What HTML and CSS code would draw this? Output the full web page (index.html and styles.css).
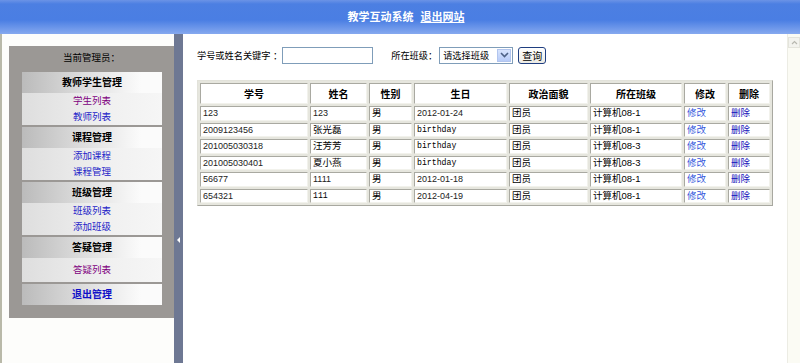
FILE: index.html
```html
<!DOCTYPE html>
<html lang="zh-CN">
  <head>
    <meta charset="UTF-8" />
    <title>教学互动系统</title>
    <link rel="stylesheet" href="styles.css">
  </head>
  <body>
    <div class="top">
      <span class="top-title">教学互动系统</span>
      <a href="#" class="top-exit">退出网站</a>
    </div>

    <div class="frames">
      <div class="left-frame">
        <div class="panel">
          <div class="admin">当前管理员：</div>
          <div class="menu">
            <div class="menu-head">教师学生管理</div>
            <div class="menu-items">
              <a href="#" class="visited">学生列表</a>
              <a href="#">教师列表</a>
            </div>
            <div class="menu-head">课程管理</div>
            <div class="menu-items">
              <a href="#">添加课程</a>
              <a href="#">课程管理</a>
            </div>
            <div class="menu-head">班级管理</div>
            <div class="menu-items">
              <a href="#">班级列表</a>
              <a href="#">添加班级</a>
            </div>
            <div class="menu-head">答疑管理</div>
            <div class="menu-items single">
              <a href="#" class="visited">答疑列表</a>
            </div>
            <div class="menu-head logout">退出管理</div>
          </div>
        </div>
      </div>

      <div class="splitter"><span class="arrow"></span></div>

      <div class="right-frame">
        <div class="content">
          <div class="search">
            <span>学号或姓名关键字 ：</span>
            <input type="text" class="keyword" />
            <span class="class-label">所在班级：</span>
            <div class="select">
              <span class="select-text">请选择班级</span>
              <span class="select-btn">
                <svg width="9" height="6" viewBox="0 0 9 6"><path d="M1 1 L4.5 4.5 L8 1" fill="none" stroke="#4d6185" stroke-width="1.6"/></svg>
              </span>
            </div>
            <button class="query">查询</button>
          </div>

          <table class="list">
            <tr>
              <th class="c1">学号</th>
              <th class="c2">姓名</th>
              <th class="c3">性别</th>
              <th class="c4">生日</th>
              <th class="c5">政治面貌</th>
              <th class="c6">所在班级</th>
              <th class="c7">修改</th>
              <th>删除</th>
            </tr>
            <tr>
              <td class="num">123</td>
              <td class="num">123</td>
              <td>男</td>
              <td class="num">2012-01-24</td>
              <td>团员</td>
              <td>计算机08-1</td>
              <td><a href="#" class="edit">修改</a></td>
              <td><a href="#" class="del">删除</a></td>
            </tr>
            <tr>
              <td class="num">2009123456</td>
              <td>张光磊</td>
              <td>男</td>
              <td class="mono">birthday</td>
              <td>团员</td>
              <td>计算机08-1</td>
              <td><a href="#" class="edit">修改</a></td>
              <td><a href="#" class="del">删除</a></td>
            </tr>
            <tr>
              <td class="num">201005030318</td>
              <td>汪芳芳</td>
              <td>男</td>
              <td class="mono">birthday</td>
              <td>团员</td>
              <td>计算机08-3</td>
              <td><a href="#" class="edit">修改</a></td>
              <td><a href="#" class="del">删除</a></td>
            </tr>
            <tr>
              <td class="num">201005030401</td>
              <td>夏小燕</td>
              <td>男</td>
              <td class="mono">birthday</td>
              <td>团员</td>
              <td>计算机08-3</td>
              <td><a href="#" class="edit">修改</a></td>
              <td><a href="#" class="del">删除</a></td>
            </tr>
            <tr>
              <td class="num">56677</td>
              <td class="num">1111</td>
              <td>男</td>
              <td class="num">2012-01-18</td>
              <td>团员</td>
              <td>计算机08-1</td>
              <td><a href="#" class="edit">修改</a></td>
              <td><a href="#" class="del">删除</a></td>
            </tr>
            <tr>
              <td class="num">654321</td>
              <td class="mono">111</td>
              <td>男</td>
              <td class="num">2012-04-19</td>
              <td>团员</td>
              <td>计算机08-1</td>
              <td><a href="#" class="edit">修改</a></td>
              <td><a href="#" class="del">删除</a></td>
            </tr>
          </table>
        </div>

        <div class="scrollbar">
          <div class="scroll-up">
            <svg width="7" height="5" viewBox="0 0 7 5"><path d="M1 4 L3.5 1.5 L6 4" fill="none" stroke="#b8b8b0" stroke-width="1.2"/></svg>
          </div>
        </div>
      </div>
    </div>
  </body>
</html>
```

FILE: styles.css
```css
html,
body {
  margin: 0;
  height: 100%;
}

body {
  font-family: "Liberation Sans", "Noto Sans CJK SC", sans-serif;
  font-size: 9.5px;
  color: #000;
  background-color: #fff;
  display: flex;
  flex-direction: column;
  overflow: hidden;
}

a {
  text-decoration: none;
}

/* top banner */
.top {
  flex: none;
  height: 34px;
  padding: 0 0 2px 12px;
  box-sizing: border-box;
  display: flex;
  justify-content: center;
  align-items: center;
  gap: 7px;
  background: linear-gradient(#6b93e6 0, #4c7fe2 4px, #4a7ee3 20px, #86a9ef 34px);
  color: #fff;
  font-weight: bold;
  font-size: 11px;
}

.top-exit {
  color: #fff;
  text-decoration: underline;
}

.frames {
  flex: 1;
  display: flex;
  min-height: 0;
}

/* left menu frame */
.left-frame {
  width: 174px;
  flex: none;
  box-sizing: border-box;
  border-left: 2px solid #b9b9a9;
  padding: 12px 0 0 7px;
  background-color: #fdfdfb;
}

.panel {
  width: 165px;
  height: 272px;
  background-color: #9b9895;
}

.admin {
  height: 26px;
  line-height: 24px;
  text-align: center;
  font-size: 9.5px;
}

.menu {
  margin: 0 12px 0 13px;
}

.menu-head {
  height: 21px;
  line-height: 21px;
  text-align: center;
  font-weight: bold;
  font-size: 10px;
  background: linear-gradient(to right, #bbbbbb, #dedede 45%, #fbfbfb 85%);
}

.menu-head.logout {
  color: #1010c8;
}

.menu-items {
  margin-bottom: 2px;
  text-align: center;
  background: linear-gradient(to right, #dedede, #f0f0f0 60%, #f6f6f6);
}

.menu-items.single {
  padding: 4px 0;
}

.menu-items a {
  display: block;
  line-height: 16px;
  color: #2424c8;
}

.menu-items a.visited {
  color: #800080;
}

/* splitter */
.splitter {
  width: 9px;
  flex: none;
  background-color: #6e7893;
  display: flex;
  flex-direction: column;
  align-items: center;
  padding-top: 203px;
  box-sizing: border-box;
}

.arrow {
  width: 0;
  height: 0;
  border-top: 3px solid transparent;
  border-bottom: 3px solid transparent;
  border-right: 3px solid #fff;
}

/* right content frame */
.right-frame {
  flex: 1;
  display: flex;
  min-width: 0;
}

.content {
  flex: 1;
  padding: 12px 0 0 14px;
}

.search {
  display: flex;
  align-items: center;
  height: 18px;
  font-size: 9.2px;
}

.keyword {
  width: 91px;
  height: 17px;
  box-sizing: border-box;
  margin: 0;
  padding: 0;
  border: 1px solid #7f9db9;
}

.class-label {
  margin-left: 18px;
}

.select {
  width: 74px;
  height: 17px;
  box-sizing: border-box;
  margin-left: 2px;
  border: 1px solid #7f9db9;
  display: flex;
  align-items: center;
  justify-content: space-between;
  padding: 1px;
}

.select-text {
  padding-left: 2px;
}

.select-btn {
  width: 14px;
  height: 13px;
  background: linear-gradient(#d8e4fd, #b7cbf7);
  border: 1px solid #b2c5ee;
  box-sizing: border-box;
  display: flex;
  align-items: center;
  justify-content: center;
}

.query {
  margin-left: 5px;
  width: 28px;
  height: 17px;
  padding: 0;
  font-family: "Liberation Sans", "Noto Sans CJK SC", sans-serif;
  font-size: 10px;
  border: 1px solid #1f3e80;
  border-radius: 3px;
  background: linear-gradient(#ffffff, #ecebe4);
}

/* student table */
.list {
  margin-top: 16px;
  width: 576px;
  table-layout: fixed;
  border-collapse: separate;
  border-spacing: 2px;
  border: 1px solid;
  border-color: #e2e2da #a8a8a0 #a8a8a0 #e2e2da;
  background-color: #e6e6de;
}

.list th,
.list td {
  box-sizing: border-box;
  border: 1px solid;
  border-color: #a9a9a1 #f2f2ec #f2f2ec #a9a9a1;
  background-color: #fff;
  padding: 0 2px;
  white-space: nowrap;
  overflow: hidden;
}

.list th {
  height: 21px;
  font-size: 10px;
  font-weight: bold;
  text-align: center;
}

.list td {
  height: 14.5px;
  line-height: 12px;
  text-align: left;
}

.list .c1 { width: 108px; }
.list .c2 { width: 57px; }
.list .c3 { width: 43px; }
.list .c4 { width: 93px; }
.list .c5 { width: 79px; }
.list .c6 { width: 92px; }
.list .c7 { width: 42px; }

.list td.num {
  font-size: 9px;
  color: #222;
}

.list td.mono {
  font-family: "Liberation Mono", monospace;
  font-size: 8.2px;
}

.edit {
  color: #3456dc;
}

.del {
  color: #1212bb;
}

/* frame scrollbar */
.scrollbar {
  width: 13px;
  flex: none;
  box-sizing: border-box;
  padding-top: 3px;
  border-left: 1px solid #ecece4;
  background-color: #fbfbf4;
}

.scroll-up {
  height: 11px;
  box-sizing: border-box;
  border: 1px solid #e4e4dc;
  background-color: #f3f3ee;
  display: flex;
  align-items: center;
  justify-content: center;
}
```
